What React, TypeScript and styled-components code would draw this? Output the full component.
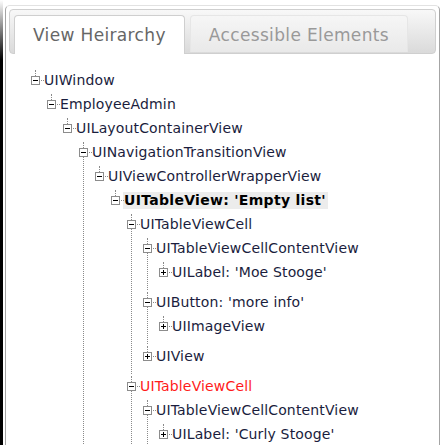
import React from "react";
import styled, { createGlobalStyle, css } from "styled-components";

const Global = createGlobalStyle`
  html, body {
    margin: 0;
    padding: 0;
    background: #fff;
    overflow: hidden;
  }
`;

type TreeNode = {
  label: string;
  children?: TreeNode[];
  collapsed?: boolean;
  selected?: boolean;
  red?: boolean;
  continues?: boolean;
};

const tree: TreeNode[] = [
  {
    label: "UIWindow",
    children: [
      {
        label: "EmployeeAdmin",
        children: [
          {
            label: "UILayoutContainerView",
            children: [
              {
                label: "UINavigationTransitionView",
                continues: true,
                children: [
                  {
                    label: "UIViewControllerWrapperView",
                    children: [
                      {
                        label: "UITableView: 'Empty list'",
                        selected: true,
                        children: [
                          {
                            label: "UITableViewCell",
                            children: [
                              {
                                label: "UITableViewCellContentView",
                                children: [
                                  { label: "UILabel: 'Moe Stooge'", collapsed: true },
                                ],
                              },
                              {
                                label: "UIButton: 'more info'",
                                children: [{ label: "UIImageView", collapsed: true }],
                              },
                              { label: "UIView", collapsed: true },
                            ],
                          },
                          {
                            label: "UITableViewCell",
                            red: true,
                            continues: true,
                            children: [
                              {
                                label: "UITableViewCellContentView",
                                continues: true,
                                children: [
                                  { label: "UILabel: 'Curly Stooge'", collapsed: true },
                                ],
                              },
                            ],
                          },
                        ],
                      },
                    ],
                  },
                ],
              },
            ],
          },
        ],
      },
    ],
  },
];

const Page = styled.div`
  display: flex;
  height: 445px;
  overflow: hidden;
  background: #fff;
`;

const Edge = styled.div`
  width: 3px;
  flex: none;
  background: linear-gradient(#ffffff 0, #000000 60px);
`;

const Frame = styled.div`
  margin: 5px 0 0 2px;
  width: 435px;
  flex: none;
  box-sizing: border-box;
  border: 1px solid #a4a4a4;
  border-top-color: #e2e2e2;
  border-bottom: none;
  border-radius: 5px 5px 0 0;
  padding: 3px 3px 0;
  display: flex;
  flex-direction: column;
`;

const TabBar = styled.div`
  height: 45px;
  flex: none;
  box-sizing: border-box;
  border: 1px solid #cfcfcf;
  border-radius: 4px;
  background: linear-gradient(#f8f8f8, #dadada);
  display: flex;
  align-items: flex-end;
  gap: 5px;
  padding-left: 4px;
`;

const Tab = styled.div<{ $active?: boolean }>`
  box-sizing: border-box;
  padding: 0 18px;
  font-family: "DejaVu Sans", Verdana, sans-serif;
  font-size: 17px;
  letter-spacing: 0.35px;
  white-space: nowrap;
  border-radius: 4px 4px 0 0;
  ${(p) =>
    p.$active
      ? css`
          height: 39px;
          line-height: 38px;
          margin-bottom: -1px;
          background: #fff;
          border: 1px solid #cfcfcf;
          border-bottom: none;
          color: #666;
        `
      : css`
          height: 37px;
          line-height: 38px;
          margin-bottom: 1px;
          background: linear-gradient(#f6f6f6, #e9e9e9);
          border: 1px solid #e6e6e6;
          border-bottom: none;
          color: #999;
        `}
`;

const Tree = styled.ul`
  list-style: none;
  margin: 0;
  padding: 14px 0 0 22px;
`;

const Children = styled.ul`
  list-style: none;
  margin: 0 0 0 16px;
  padding: 0;
`;

const Item = styled.li<{ $continues: boolean; $collapsed: boolean }>`
  position: relative;
  padding-bottom: ${(p) => (p.$collapsed ? "6px" : "0")};

  &::before {
    content: "";
    position: absolute;
    left: 4px;
    top: 2px;
    border-left: 1px dotted #8a8a8a;
    ${(p) => (p.$continues ? "bottom: 0;" : "height: 6px;")}
  }
`;

const Row = styled.div`
  display: flex;
  align-items: center;
  height: 24px;
`;

const Toggle = styled.span`
  position: relative;
  flex: none;
  width: 9px;
  height: 9px;
  margin-right: 4px;
  display: block;

  svg {
    display: block;
  }

  &::after {
    content: "";
    position: absolute;
    left: 10px;
    top: 4px;
    width: 3px;
    border-top: 1px dotted #8a8a8a;
  }
`;

const Label = styled.span<{ $selected?: boolean; $red?: boolean }>`
  font-family: "DejaVu Sans", Verdana, sans-serif;
  font-size: 14px;
  line-height: 17px;
  white-space: nowrap;
  padding: 0 2px 0 1px;
  margin-left: -1px;
  letter-spacing: ${(p) => (p.$selected ? "0.3px" : "0.15px")};
  color: ${(p) => (p.$red ? "#ff1a1a" : p.$selected ? "#000" : "#1a1d3d")};
  font-weight: ${(p) => (p.$selected ? "bold" : "normal")};
  background: ${(p) => (p.$selected ? "#ececec" : "transparent")};
`;

function ToggleIcon({ open }: { open: boolean }) {
  return (
    <svg width="9" height="9" viewBox="0 0 9 9">
      <rect x="0.5" y="0.5" width="8" height="8" fill="#fff" stroke="#8c8c8c" />
      <path d="M2 4.5h5" stroke="#000" />
      {!open && <path d="M4.5 2v5" stroke="#000" />}
    </svg>
  );
}

function Node({ node, last }: { node: TreeNode; last: boolean }) {
  const open = !node.collapsed;
  return (
    <Item $continues={!last || !!node.continues} $collapsed={!!node.collapsed}>
      <Row>
        <Toggle>
          <ToggleIcon open={open} />
        </Toggle>
        <Label $selected={node.selected} $red={node.red}>
          {node.label}
        </Label>
      </Row>
      {open && node.children && (
        <Children>
          {node.children.map((c, i) => (
            <Node key={i} node={c} last={i === node.children!.length - 1} />
          ))}
        </Children>
      )}
    </Item>
  );
}

export default function App() {
  return (
    <>
      <Global />
      <Page>
        <Edge />
        <Frame>
          <TabBar>
            <Tab $active>View Heirarchy</Tab>
            <Tab>Accessible Elements</Tab>
          </TabBar>
          <Tree>
            {tree.map((n, i) => (
              <Node key={i} node={n} last={i === tree.length - 1} />
            ))}
          </Tree>
        </Frame>
      </Page>
    </>
  );
}
